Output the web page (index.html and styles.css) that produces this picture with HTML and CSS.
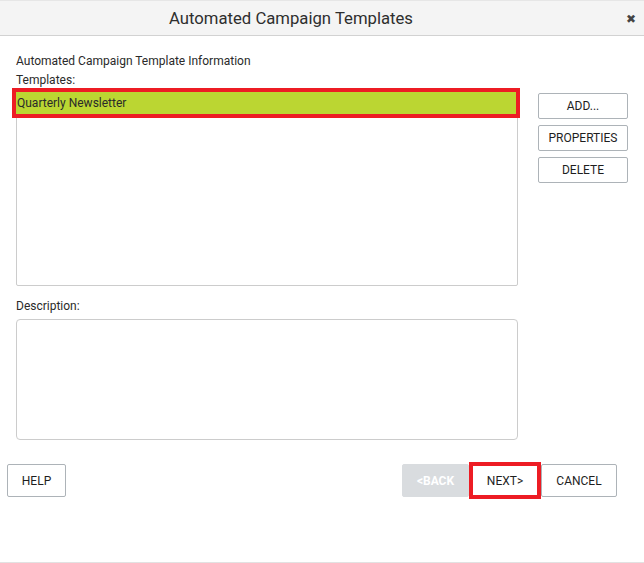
FILE: index.html
```html
<!DOCTYPE html>
<html lang="en">
    <head>
        <meta charset="UTF-8">
        <meta name="viewport" content="width=device-width, initial-scale=1.0">
        <title>Automated Campaign Templates</title>
        <link rel="stylesheet" href="styles.css">
    </head>
    <body>

        <div class="dialog">
            <!-- Title Bar -->
            <div class="title-bar">
                <div class="title">Automated Campaign Templates</div>
                <button class="close" title="Close">&#x2716;</button>
            </div>

            <!-- Body -->
            <div class="content">
                <div class="label">Automated Campaign Template Information</div>
                <div class="label">Templates:</div>

                <div class="templates-row">
                    <div class="listbox">
                        <div class="list-item selected">Quarterly Newsletter</div>
                    </div>
                    <div class="side-buttons">
                        <button class="button">ADD...</button>
                        <button class="button">PROPERTIES</button>
                        <button class="button">DELETE</button>
                    </div>
                </div>

                <div class="label description-label">Description:</div>
                <div class="description"></div>
            </div>

            <!-- Footer Buttons -->
            <div class="footer">
                <button class="button wide">HELP</button>
                <div class="nav-buttons">
                    <button class="button back" disabled>&lt;BACK</button>
                    <button class="button next">NEXT&gt;</button>
                    <button class="button cancel">CANCEL</button>
                </div>
            </div>
        </div>

    </body>
</html>
```

FILE: styles.css
```css
/* Page */
body {
  margin: 0;
  background-color: #FFFFFF;
  font-family: Roboto, "Liberation Sans", Arial, sans-serif;
  color: #2A2A2A;
}

/* Dialog Container */
.dialog {
  width: 644px;
  height: 563px;
  box-sizing: border-box;
  border-bottom: 1px solid #E2E2E2;
  background-color: #FFFFFF;
}

/* Title Bar */
.title-bar {
  height: 36px;
  background-color: #F4F4F4;
  border-top: 1px solid #E6E6E6;
  border-bottom: 1px solid #D2D2D2;
  display: flex;
  align-items: center;
  box-sizing: border-box;
  padding: 0 8px 0 0;
}

.title {
  flex: 1;
  text-align: center;
  font-size: 16.7px;
  color: #2E2E2E;
  padding-right: 44px;
}

.close {
  border: none;
  background: none;
  padding: 0;
  font-size: 12px;
  color: #444444;
  cursor: pointer;
  line-height: 14px;
  margin-top: 2px;
}

/* Body */
.content {
  padding: 18px 0 0 16px;
}

.label {
  font-size: 12px;
  line-height: 14px;
  height: 19px;
  color: #2A2A2A;
}

.templates-row {
  display: flex;
  gap: 20px;
  margin-top: -1px;
}

/* Template List */
.listbox {
  width: 502px;
  height: 195px;
  box-sizing: border-box;
  border: 1px solid #CCCCCC;
  border-radius: 2px;
}

.list-item {
  height: 22px;
  line-height: 23px;
  font-size: 12px;
  padding-left: 1px;
  margin-left: -1px;
  margin-right: 1px;
  color: #2A2A2A;
}

.list-item.selected {
  background-color: #BBD632; /* Highlighted row */
  outline: 4px solid #ED1C24;
}

/* Side Buttons */
.side-buttons {
  display: flex;
  flex-direction: column;
  gap: 6px;
  padding-top: 2px;
}

.side-buttons .button {
  width: 90px;
  height: 26px;
}

/* Button Styles */
.button {
  font-family: Roboto, "Liberation Sans", Arial, sans-serif;
  font-size: 12px;
  color: #1E1E1E;
  background-color: #FFFFFF;
  border: 1px solid #ADB3B8;
  border-radius: 2px;
  padding: 0;
  cursor: pointer;
}

.description-label {
  margin-top: 13px;
  height: 20px;
}

.description {
  width: 502px;
  height: 121px;
  box-sizing: border-box;
  border: 1px solid #CCCCCC;
  border-radius: 4px;
}

/* Footer */
.footer {
  display: flex;
  justify-content: space-between;
  align-items: center;
  padding: 0 27px 0 7px;
  margin-top: 22px;
}

.footer .button {
  height: 33px;
}

.button.wide {
  width: 59px;
}

.nav-buttons {
  display: flex;
  align-items: center;
}

.button.back {
  width: 67px;
  background-color: #D9DCDF;
  border-color: #D9DCDF;
  color: #FFFFFF;
  font-weight: bold;
  cursor: default;
}

.button.next {
  width: 72px;
  height: 37px;
  border: 4px solid #ED1C24; /* Highlight frame */
  border-radius: 0;
}

.button.cancel {
  width: 76px;
}
```
